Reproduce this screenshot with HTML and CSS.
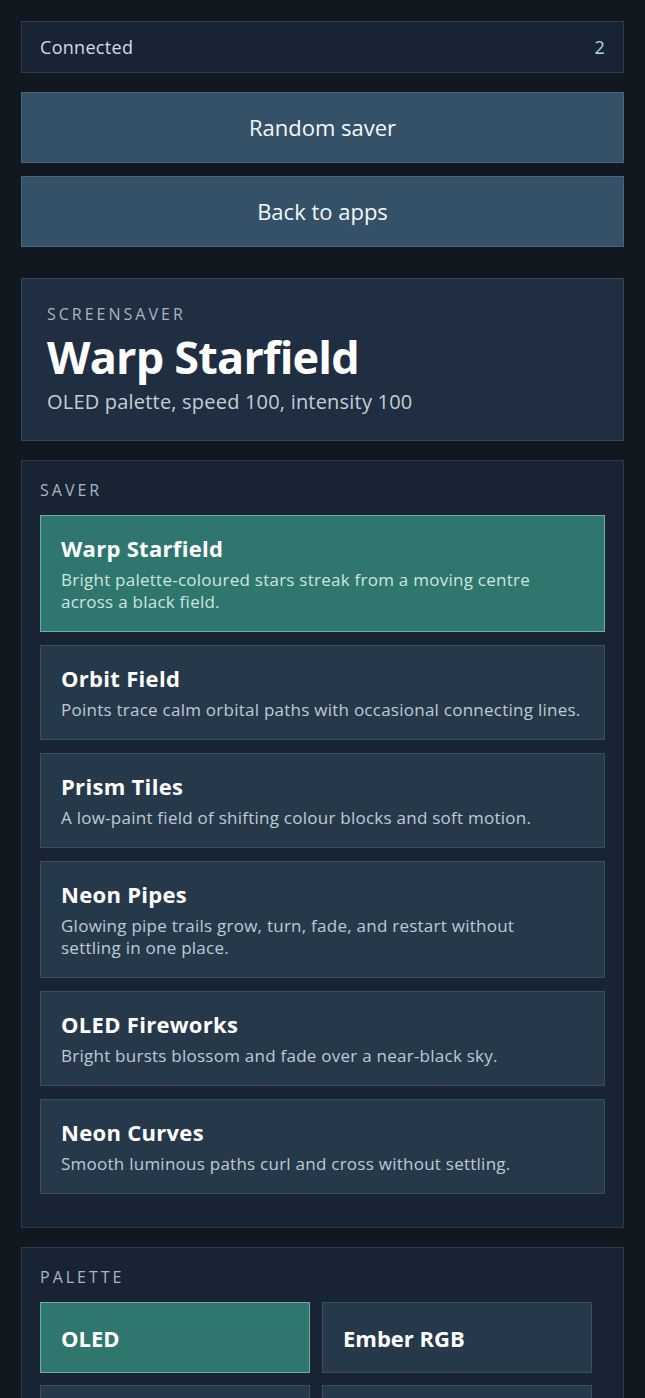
FILE: index.html
```html
<!DOCTYPE html>
<html lang="en">
<head>
<meta charset="utf-8">
<title>Screensaver</title>
<link rel="stylesheet" href="styles.css">
</head>
<body>
<main class="page">
  <div class="status">
    <span class="status-label">Connected</span>
    <span class="status-count">2</span>
  </div>
  <div class="actions">
    <button class="btn">Random saver</button>
    <button class="btn">Back to apps</button>
  </div>
  <section class="hero">
    <div class="eyebrow">SCREENSAVER</div>
    <h1 class="hero-title">Warp Starfield</h1>
    <p class="hero-sub">OLED palette, speed 100, intensity 100</p>
  </section>
  <section class="panel">
    <div class="panel-label">SAVER</div>
    <div class="list">
      <div class="item selected">
        <div class="item-title">Warp Starfield</div>
        <div class="item-desc">Bright palette-coloured stars streak from a moving centre across a black field.</div>
      </div>
      <div class="item">
        <div class="item-title">Orbit Field</div>
        <div class="item-desc">Points trace calm orbital paths with occasional connecting lines.</div>
      </div>
      <div class="item">
        <div class="item-title">Prism Tiles</div>
        <div class="item-desc">A low-paint field of shifting colour blocks and soft motion.</div>
      </div>
      <div class="item">
        <div class="item-title">Neon Pipes</div>
        <div class="item-desc">Glowing pipe trails grow, turn, fade, and restart without<br>settling in one place.</div>
      </div>
      <div class="item">
        <div class="item-title">OLED Fireworks</div>
        <div class="item-desc">Bright bursts blossom and fade over a near-black sky.</div>
      </div>
      <div class="item">
        <div class="item-title">Neon Curves</div>
        <div class="item-desc">Smooth luminous paths curl and cross without settling.</div>
      </div>
    </div>
  </section>
  <section class="panel">
    <div class="panel-label">PALETTE</div>
    <div class="grid">
      <div class="chip selected">OLED</div>
      <div class="chip">Ember RGB</div>
      <div class="chip">Ocean</div>
      <div class="chip">Aurora</div>
    </div>
  </section>
</main>
</body>
</html>
```
FILE: styles.css
```css
* { box-sizing: border-box; }
html, body { margin: 0; padding: 0; }
body {
  background: #111820;
  color: #f2f5f8;
  font-family: "Open Sans", "Noto Sans", sans-serif;
}
.page {
  padding: 21px 21px;
  display: flex;
  flex-direction: column;
}
.status {
  height: 52px;
  background: #182433;
  border: 1px solid #2b3b4c;
  display: flex;
  align-items: center;
  justify-content: space-between;
  padding: 0 18px;
  font-size: 18px;
  letter-spacing: 0.3px;
}
.status-label { color: #d3dbe3; }
.status-count { color: #a7d8f2; }
.actions {
  margin-top: 19px;
  display: flex;
  flex-direction: column;
  gap: 13px;
}
.btn {
  height: 71px;
  background: #355168;
  border: 1px solid #48667f;
  color: #f4f7fa;
  font-family: inherit;
  font-size: 22px;
  padding: 0 0 2px;
}
.hero {
  margin-top: 31px;
  background: #1f2e40;
  border: 1px solid #34465a;
  padding: 24px 25px 25px;
}
.eyebrow {
  font-size: 16px;
  letter-spacing: 3px;
  color: #a9b6c2;
  line-height: 22px;
}
.hero-title {
  margin: 4px 0 0;
  font-size: 45px;
  font-weight: 700;
  letter-spacing: -0.8px;
  line-height: 56px;
  color: #ffffff;
}
.hero-sub {
  margin: 4px 0 0;
  font-size: 20px;
  letter-spacing: 0.2px;
  line-height: 26px;
  color: #c3ced9;
}
.panel {
  margin-top: 19px;
  background: #182433;
  border: 1px solid #2b3b4c;
  padding: 18px 18px 33px;
}
.panel-label {
  font-size: 16px;
  letter-spacing: 3px;
  color: #a9b6c2;
  line-height: 22px;
}
.list {
  margin-top: 14px;
  display: flex;
  flex-direction: column;
  gap: 13px;
}
.item {
  background: #26394b;
  border: 1px solid #3a4e62;
  padding: 18px 20px 18px;
}
.item.selected {
  background: #2e766e;
  border-color: #71aba3;
}
.item-title {
  font-size: 22px;
  font-weight: 700;
  letter-spacing: 0.3px;
  line-height: 28px;
  color: #ffffff;
}
.item-desc {
  margin-top: 7px;
  font-size: 17px;
  letter-spacing: 0.25px;
  line-height: 22px;
  color: #bfcad5;
}
.item.selected .item-desc { color: #cfe5e0; }
.grid {
  margin-top: 14px;
  display: grid;
  grid-template-columns: 270px 270px;
  gap: 12px;
}
.chip {
  height: 71px;
  background: #26394b;
  border: 1px solid #3a4e62;
  display: flex;
  align-items: center;
  padding: 0 20px;
  font-size: 22px;
  font-weight: 700;
  color: #ffffff;
}
.chip.selected {
  background: #2e766e;
  border-color: #71aba3;
}
```
